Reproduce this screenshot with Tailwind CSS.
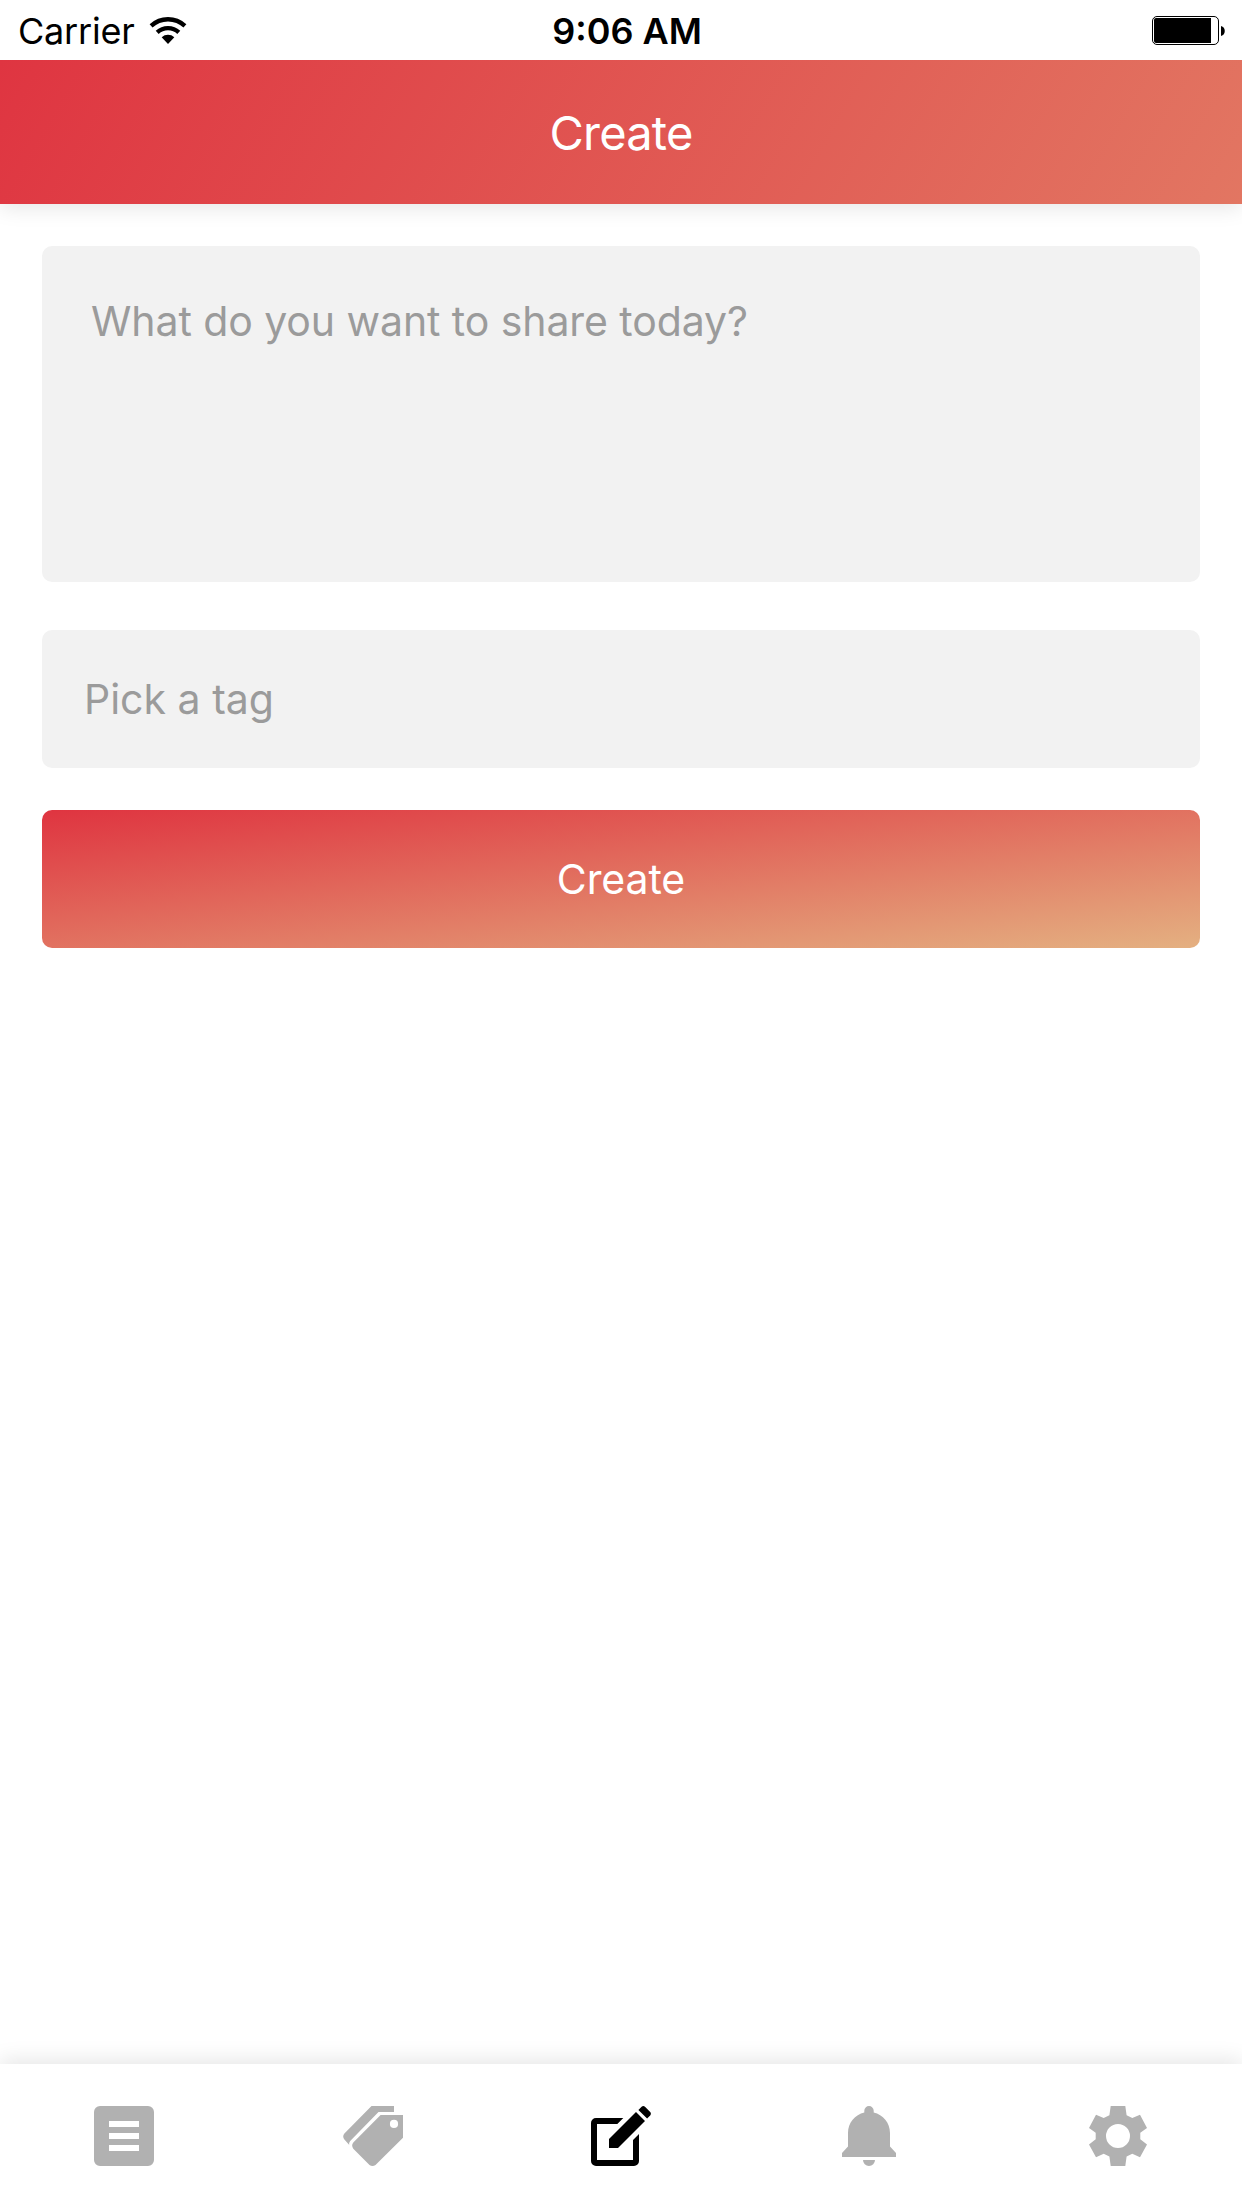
<!DOCTYPE html>
<html lang="en">
<head>
<meta charset="utf-8">
<title>Create</title>
<script src="https://cdn.jsdelivr.net/npm/@tailwindcss/browser@4"></script>
</head>
<body class="bg-white">
<div class="flex h-[2208px] w-[1242px] flex-col overflow-hidden bg-white font-['Inter',sans-serif]">

  <!-- Status bar -->
  <div class="relative z-20 grid h-[60px] shrink-0 grid-cols-3 items-center bg-white text-[36px] leading-[44px] text-black">
    <div class="flex items-center pl-[18px]">
      <span class="pt-[2px] tracking-[-0.2px]">Carrier</span>
      <svg class="ml-[14px] h-[28px] w-[38px]" viewBox="-19 -28 38 28" fill="none" stroke="#000" stroke-width="4.3">
        <path d="M-16.9-18.1A24.8 24.8 0 0 1 16.9-18.1M-10.8-11.6A15.8 15.8 0 0 1 10.8-11.6"/>
        <path d="M0 0-6.3-6.8A9.3 9.3 0 0 1 6.3-6.8Z" fill="#000" stroke="none"/>
      </svg>
    </div>
    <div class="pl-[12px] pt-[2px] text-center font-semibold">9:06 AM</div>
    <div class="flex justify-end pr-[17px]">
      <svg class="h-[29px] w-[73px]" viewBox="0 0 73 29">
        <rect x=".5" y=".5" width="66" height="28" rx="4.5" fill="none" stroke="#000"/>
        <path d="M4 2H59V27H4A2 2 0 0 1 2 25V4A2 2 0 0 1 4 2Z"/>
        <path d="M69 10C74 11 74 19 69 20Z"/>
      </svg>
    </div>
  </div>

  <!-- Header -->
  <header class="z-10 flex h-[144px] shrink-0 items-center justify-center bg-[linear-gradient(120deg,#df3541,#e27662)] shadow-[0_4px_20px_rgba(0,0,0,0.1)]">
    <h1 class="text-[47px] leading-[57px] tracking-[-0.8px] text-white">Create</h1>
  </header>

  <!-- Post form -->
  <main class="flex flex-1 flex-col px-[42px] pt-[42px] text-[41px] leading-[50px]">
    <div class="h-[336px] rounded-[10px] bg-[#f2f2f2] pt-[50px] pl-[49px] tracking-[-0.08px] text-[#9b9b9b]">What do you want to share today?</div>
    <div class="mt-12 flex h-[138px] items-center rounded-[10px] bg-[#f2f2f2] pl-[42px] text-[#9b9b9b]">Pick a tag</div>
    <button class="mt-[42px] flex h-[138px] items-center justify-center rounded-[10px] bg-[linear-gradient(to_bottom_right,#df3440,#e4b081)] tracking-[-0.1px] text-white">Create</button>
  </main>

  <!-- Tab bar -->
  <nav class="grid h-[144px] shrink-0 grid-cols-5 items-center justify-items-center bg-white text-[#b1b1b1] shadow-[0_-4px_20px_rgba(0,0,0,0.1)]">
    <svg class="size-[60px]" viewBox="0 0 60 60" fill="currentColor">
      <path fill-rule="evenodd" d="M6 0H54A6 6 0 0 1 60 6V54A6 6 0 0 1 54 60H6A6 6 0 0 1 0 54V6A6 6 0 0 1 6 0ZM15 15V21H45V15ZM15 27V33H45V27ZM15 39V45H45V39Z"/>
    </svg>
    <svg class="size-[60px]" viewBox="0 0 60 60" fill="currentColor">
      <path d="M28.5 0H51V6H35.5L7.2 35Q5.6 37 6.3 39L1.4 33.6Q-1 30.5 1.4 27.5Z"/>
      <path fill-rule="evenodd" d="M37.6 9H60V31.8L32.5 59Q29.5 61 26.5 59L10.3 42.7Q8 39.5 10.3 36.5ZM51 13.8A4.1 4.1 0 1 0 51 22 4.1 4.1 0 1 0 51 13.8Z"/>
    </svg>
    <svg class="size-[60px] text-black" viewBox="0 0 60 60" fill="currentColor">
      <path d="M32.3 12 26.3 18H6V54H42V34L48 28V55A5 5 0 0 1 43 60H5A5 5 0 0 1 0 55V17A5 5 0 0 1 5 12Z"/>
      <path d="M18 33 45 6 54 15 27 42H18ZM47.4 3.9 50.6.8Q52.3-.6 54 .8L59.2 6Q60.6 7.7 59.2 9.4L56.1 12.6Z"/>
    </svg>
    <svg class="size-[60px]" viewBox="-3 0 60 60" fill="currentColor">
      <path d="M22.3 6.6V4.7A4.7 4.7 0 0 1 31.7 4.7V6.6C41 8.7 48 17 48 27V40.5L54 47V51H0V47L6 40.5V27C6 17 13 8.7 22.3 6.6ZM21 54H33A6 6 0 0 1 21 54Z"/>
    </svg>
    <svg class="size-[60px]" viewBox="-1 0 60 60" fill="currentColor">
      <path fill-rule="evenodd" d="M21.7 0H36.3L37.6 9.3 43.3 12 51 8.7 58 22 51.3 26.7V33.3L58 38.4 51 51.2 43.3 47.7 37.6 50.6 36.3 60H21.7L20.4 50.6 14.7 47.7 7 51.2 0 38.4 6.7 33.3V26.7L0 22 7 8.7 14.7 12 20.4 9.3ZM29 18A12 12 0 1 0 29 42 12 12 0 1 0 29 18Z"/>
    </svg>
  </nav>
</div>
</body>
</html>
